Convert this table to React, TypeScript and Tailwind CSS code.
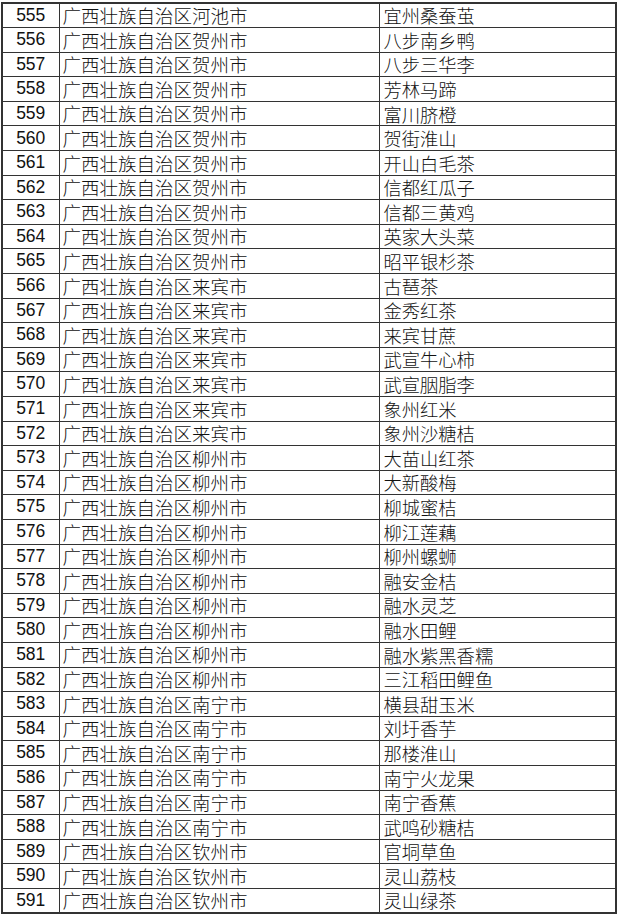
const rows: [number, string, string][] = [
  [555, '广西壮族自治区河池市', '宜州桑蚕茧'],
  [556, '广西壮族自治区贺州市', '八步南乡鸭'],
  [557, '广西壮族自治区贺州市', '八步三华李'],
  [558, '广西壮族自治区贺州市', '芳林马蹄'],
  [559, '广西壮族自治区贺州市', '富川脐橙'],
  [560, '广西壮族自治区贺州市', '贺街淮山'],
  [561, '广西壮族自治区贺州市', '开山白毛茶'],
  [562, '广西壮族自治区贺州市', '信都红瓜子'],
  [563, '广西壮族自治区贺州市', '信都三黄鸡'],
  [564, '广西壮族自治区贺州市', '英家大头菜'],
  [565, '广西壮族自治区贺州市', '昭平银杉茶'],
  [566, '广西壮族自治区来宾市', '古琶茶'],
  [567, '广西壮族自治区来宾市', '金秀红茶'],
  [568, '广西壮族自治区来宾市', '来宾甘蔗'],
  [569, '广西壮族自治区来宾市', '武宣牛心柿'],
  [570, '广西壮族自治区来宾市', '武宣胭脂李'],
  [571, '广西壮族自治区来宾市', '象州红米'],
  [572, '广西壮族自治区来宾市', '象州沙糖桔'],
  [573, '广西壮族自治区柳州市', '大苗山红茶'],
  [574, '广西壮族自治区柳州市', '大新酸梅'],
  [575, '广西壮族自治区柳州市', '柳城蜜桔'],
  [576, '广西壮族自治区柳州市', '柳江莲藕'],
  [577, '广西壮族自治区柳州市', '柳州螺蛳'],
  [578, '广西壮族自治区柳州市', '融安金桔'],
  [579, '广西壮族自治区柳州市', '融水灵芝'],
  [580, '广西壮族自治区柳州市', '融水田鲤'],
  [581, '广西壮族自治区柳州市', '融水紫黑香糯'],
  [582, '广西壮族自治区柳州市', '三江稻田鲤鱼'],
  [583, '广西壮族自治区南宁市', '横县甜玉米'],
  [584, '广西壮族自治区南宁市', '刘圩香芋'],
  [585, '广西壮族自治区南宁市', '那楼淮山'],
  [586, '广西壮族自治区南宁市', '南宁火龙果'],
  [587, '广西壮族自治区南宁市', '南宁香蕉'],
  [588, '广西壮族自治区南宁市', '武鸣砂糖桔'],
  [589, '广西壮族自治区钦州市', '官垌草鱼'],
  [590, '广西壮族自治区钦州市', '灵山荔枝'],
  [591, '广西壮族自治区钦州市', '灵山绿茶'],
];

export default function App() {
  return (
    <div className="w-[621px] h-[919px] bg-white pl-[1px] pt-[2px]">
      <table className="w-[616px] border-collapse border-2 border-[#333] table-fixed text-[#111]">
        <colgroup>
          <col className="w-[57px]" />
          <col className="w-[320px]" />
          <col />
        </colgroup>
        <tbody>
          {rows.map(([id, region, name]) => (
            <tr key={id} className="h-[24.6px]">
              <td className="border border-[#333] p-0 text-center text-[17.5px] leading-none font-['Liberation_Sans',Arial,sans-serif]">
                {id}
              </td>
              <td className="border border-[#333] p-0 pl-[3px] text-[18.5px] leading-none font-['Noto_Sans_CJK_SC',sans-serif] font-light whitespace-nowrap">
                {region}
              </td>
              <td className="border border-[#333] p-0 pl-[4px] text-[18.3px] leading-none font-['Noto_Sans_CJK_SC',sans-serif] font-light whitespace-nowrap">
                {name}
              </td>
            </tr>
          ))}
        </tbody>
      </table>
    </div>
  );
}
